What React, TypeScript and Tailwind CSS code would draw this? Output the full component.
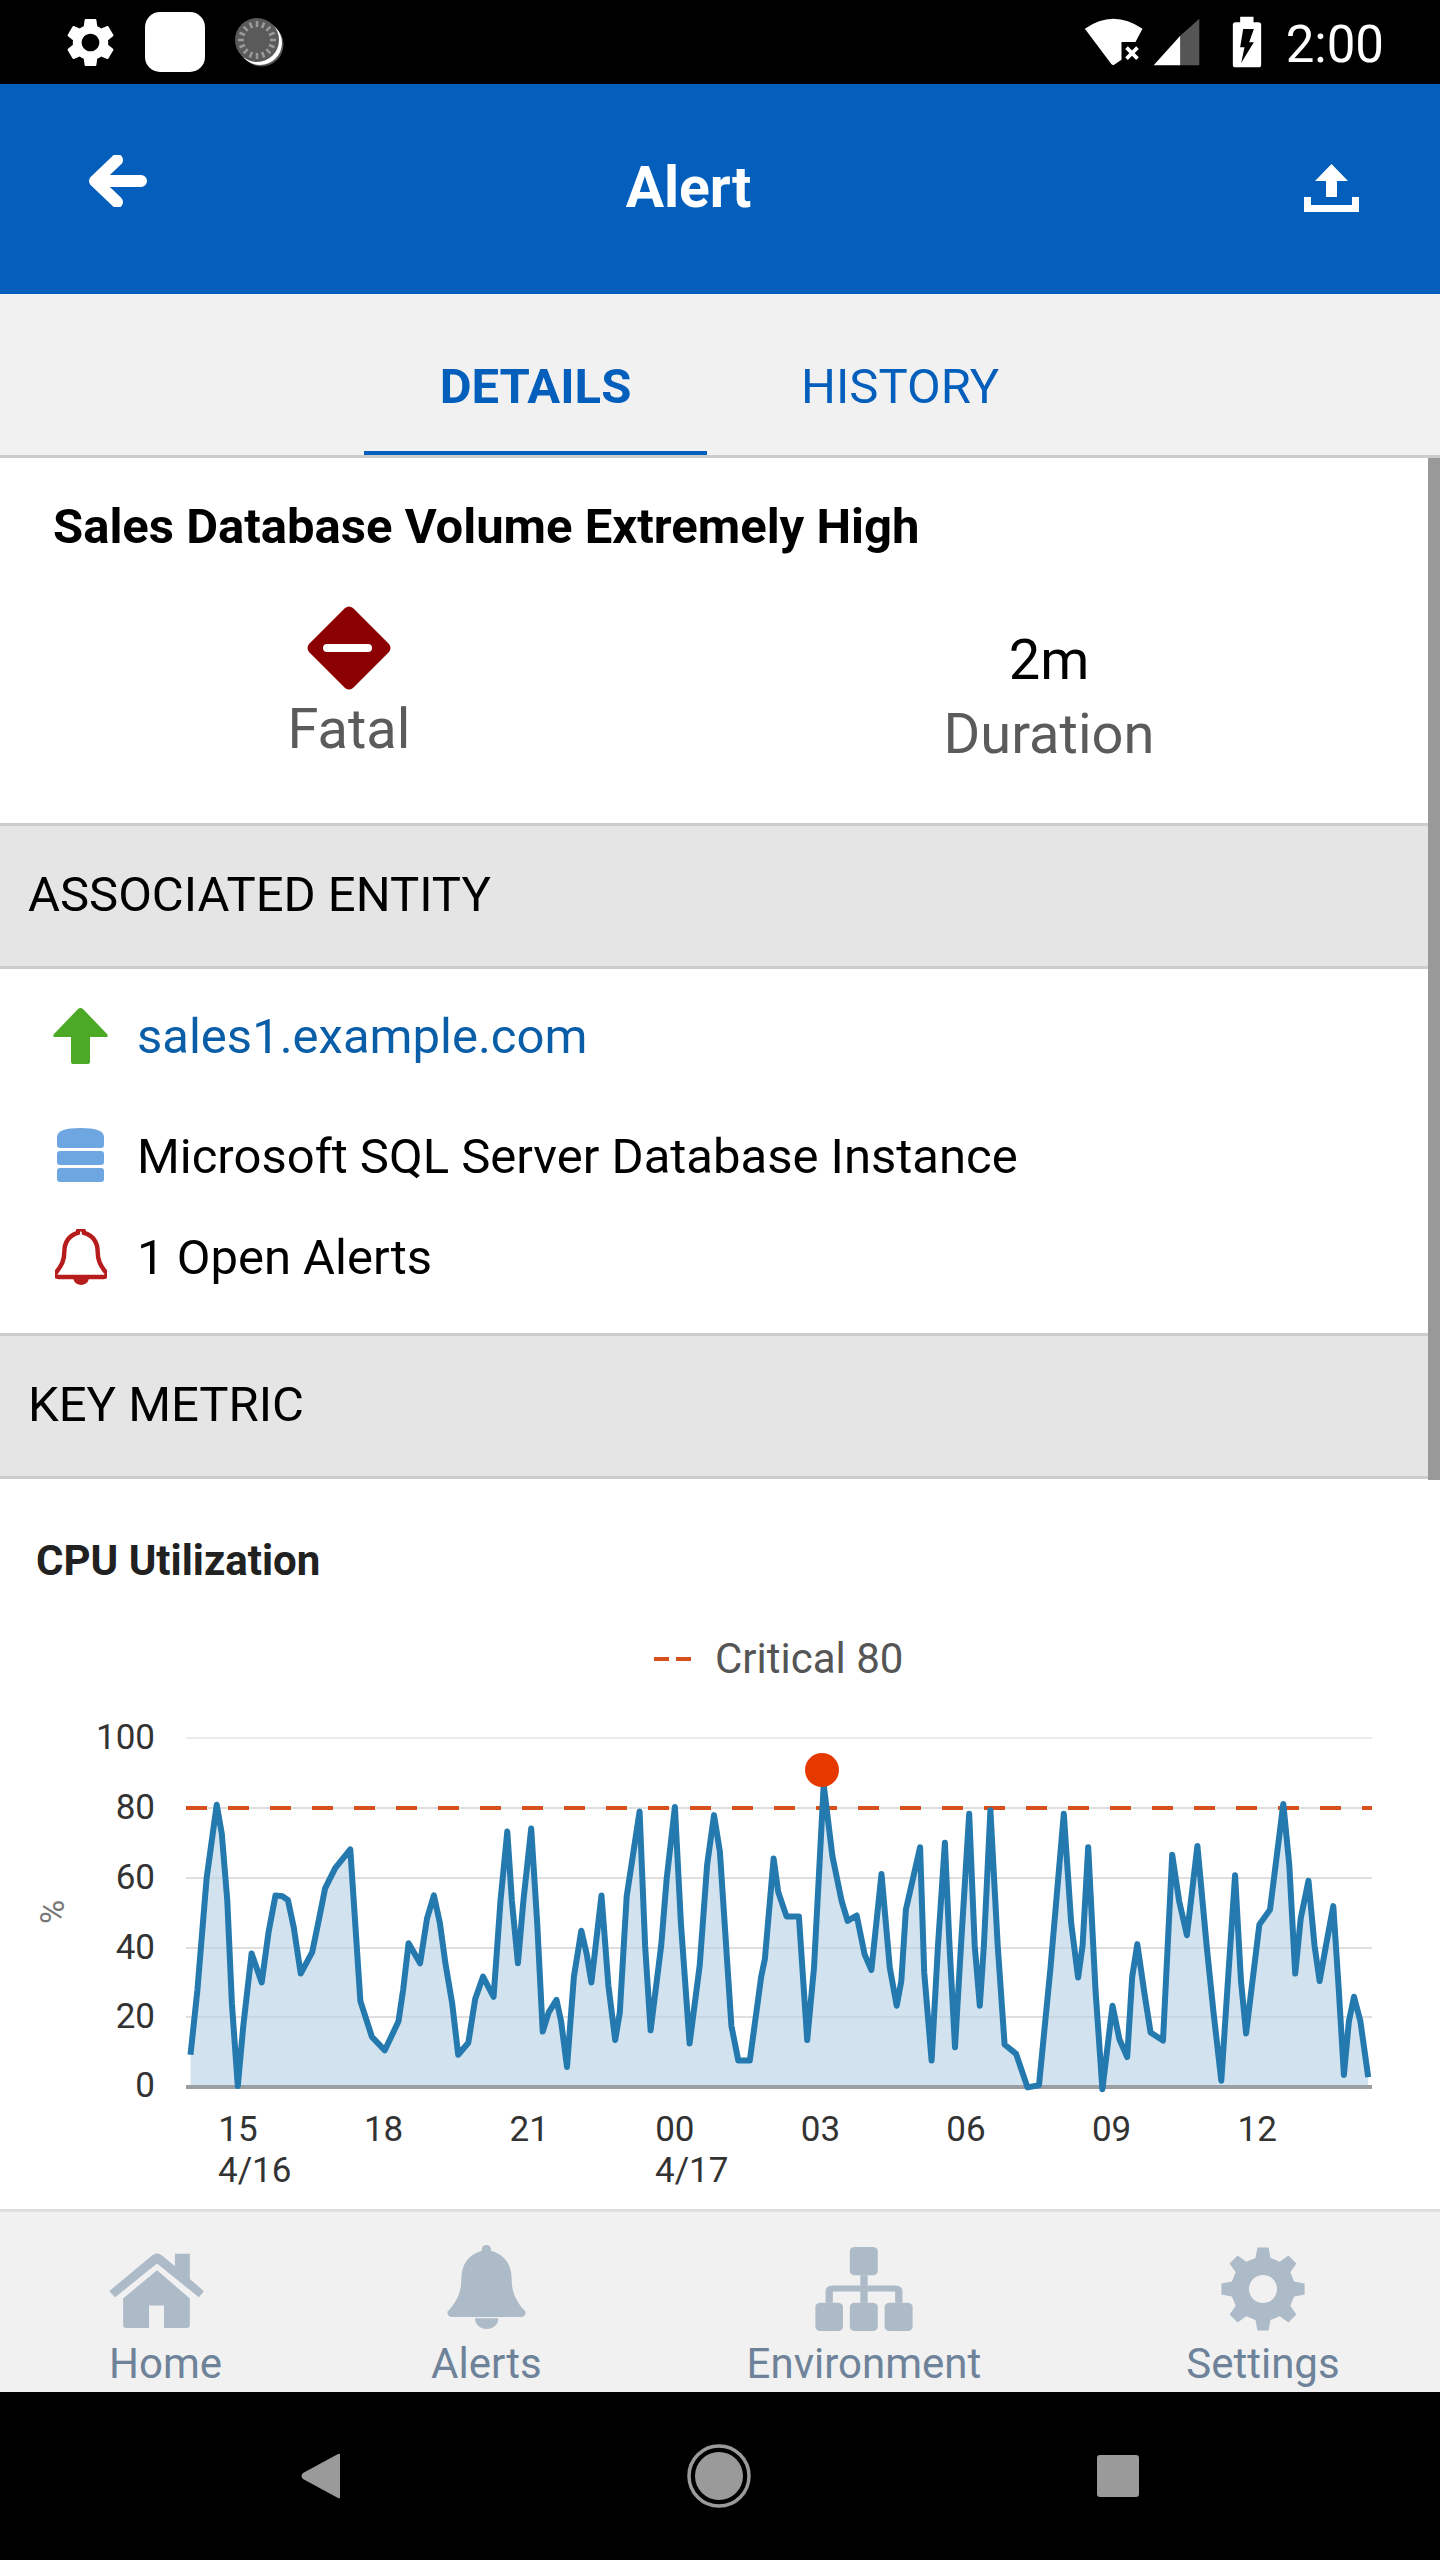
import { MdSettings } from "react-icons/md";

// chart points read off the reference, in crop pixels
const leftPts: number[][] = [
  [415, 1245], [430, 1100], [450, 850], [472, 685], [483, 750], [495, 900], [505, 1130], [518, 1315], [530, 1180], [548, 1018],
  [570, 1083], [585, 970], [600, 888], [615, 890], [627, 898], [640, 960], [655, 1063], [680, 1015], [695, 940], [708, 872],
  [730, 827], [763, 785], [785, 1125], [810, 1205], [838, 1235], [868, 1170], [878, 1100], [890, 995], [915, 1040], [930, 940],
  [945, 888], [958, 950], [970, 1040], [985, 1130], [998, 1245], [1020, 1218], [1035, 1120], [1052, 1070], [1075, 1115], [1090, 900],
  [1105, 745], [1115, 900], [1128, 1040], [1140, 900], [1157, 738], [1170, 950], [1182, 1193], [1195, 1150], [1212, 1122], [1222, 1170],
  [1235, 1272], [1250, 1070], [1266, 967], [1278, 1020], [1288, 1083], [1310, 888], [1325, 1090], [1340, 1212], [1350, 1150], [1365, 890],
  [1393, 700], [1405, 1000], [1417, 1190], [1440, 1000], [1452, 850], [1470, 690], [1483, 950], [1502, 1220], [1524, 1045], [1540, 820],
  [1555, 708],
];
const rightPts: number[][] = [
  [0, 790], [25, 1180], [40, 1258], [65, 1258], [90, 1070], [98, 1030], [117, 805], [127, 880], [145, 935], [172, 935],
  [190, 1212], [205, 1050], [226, 640], [245, 800], [265, 900], [278, 945], [298, 933], [315, 1020], [330, 1055], [352, 840],
  [370, 1050], [385, 1135], [395, 1080], [405, 920], [436, 780], [445, 1060], [461, 1258], [475, 1000], [490, 770], [500, 1000],
  [512, 1228], [525, 1000], [543, 705], [555, 1000], [566, 1135], [575, 1000], [589, 697], [605, 1000], [620, 1222], [645, 1243],
  [670, 1318], [695, 1313], [720, 1050], [749, 705], [765, 950], [780, 1072], [790, 1000], [802, 780], [818, 1100], [833, 1322],
  [855, 1135], [870, 1210], [887, 1250], [898, 1070], [909, 997], [925, 1110], [938, 1195], [965, 1213], [985, 797], [1000, 900],
  [1017, 977], [1040, 777], [1060, 1000], [1075, 1150], [1092, 1303], [1105, 1100], [1122, 843], [1135, 1080], [1146, 1197], [1175, 953],
  [1198, 920], [1227, 683], [1240, 820], [1253, 1063], [1265, 940], [1282, 855], [1295, 1000], [1306, 1080], [1320, 1000], [1336, 912],
  [1348, 1100], [1359, 1290], [1370, 1170], [1381, 1115], [1395, 1170], [1412, 1295],
];
const pts = [...leftPts, ...rightPts.map(([x, y]) => [x + 1568, y])].map(([x, y]) => [
  +(x / 2.178).toFixed(1),
  +(1500 + y / 2.24).toFixed(1),
]);
const linePath = pts.map((p) => p.join(",")).join(" ");
const areaPath = `${pts[0][0]},2088 ${linePath} ${pts[pts.length - 1][0]},2088`;

const yLabels = [
  { t: "100", y: 1739 },
  { t: "80", y: 1809 },
  { t: "60", y: 1879 },
  { t: "40", y: 1949 },
  { t: "20", y: 2018 },
  { t: "0", y: 2087 },
];
const xLabels = ["15", "18", "21", "00", "03", "06", "09", "12"];

function gearPath(r1: number, r2: number, hole: number, teeth: number) {
  const c = r1;
  const p: string[] = [];
  const step = (Math.PI * 2) / teeth;
  for (let i = 0; i < teeth; i++) {
    const a = i * step - Math.PI / 2;
    const pt = (r: number, d: number) =>
      `${(c + r * Math.cos(a + d * step)).toFixed(1)} ${(c + r * Math.sin(a + d * step)).toFixed(1)}`;
    p.push(`${i === 0 ? "M" : "L"}${pt(r2, -0.3)}`, `L${pt(r1, -0.17)}`, `L${pt(r1, 0.17)}`, `L${pt(r2, 0.3)}`);
  }
  p.push(`Z M${c - hole} ${c} a${hole} ${hole} 0 1 0 ${hole * 2} 0 a${hole} ${hole} 0 1 0 ${-hole * 2} 0 Z`);
  return p.join(" ");
}

const bellDome =
  "M1192 45Q1206 45 1206 62C1250 75 1268 105 1268 150C1268 195 1290 225 1310 245Q1310 261 1295 261H1090Q1075 261 1075 245C1095 225 1117 195 1117 150C1117 105 1135 75 1178 62Q1178 45 1192 45Z";
const bellClapper = "M1158 265H1228C1228 285 1212 297 1193 297C1174 297 1158 285 1158 265Z";

function StatusBar() {
  return (
    <div className="h-[84px] bg-black flex items-center shrink-0">
      <MdSettings className="ml-[61px] text-white w-[59px] h-[59px]" />
      <div className="ml-[25px] w-[60px] h-[60px] bg-white rounded-[15px]" />
      <svg viewBox="0 0 50 50" className="ml-[29px] w-[50px] h-[50px]">
        <circle cx="27.5" cy="27.5" r="22" fill="#555" />
        <circle cx="26" cy="26" r="22" fill="#fff" />
        <circle cx="23" cy="23" r="22" fill="#5a5a5a" />
        {Array.from({ length: 16 }).map((_, i) => (
          <line
            key={i}
            x1={23 + 13 * Math.cos((i * Math.PI) / 8)}
            y1={23 + 13 * Math.sin((i * Math.PI) / 8)}
            x2={23 + 19 * Math.cos((i * Math.PI) / 8)}
            y2={23 + 19 * Math.sin((i * Math.PI) / 8)}
            stroke="#9a9a9a"
            strokeWidth="2.5"
          />
        ))}
      </svg>
      <svg viewBox="35 50 185 150" className="ml-auto w-[62px] h-[50px]">
        <path d="M40 85Q125 25 213 85L192 125H150V178L128 193Q125 196 120 192Z" fill="#fff" />
        <path d="M165 142L198 175M198 142L165 175" stroke="#fff" strokeWidth="11" />
      </svg>
      <svg viewBox="245 58 142 144" className="ml-[8px] w-[47px] h-[48px]">
        <path d="M328 110V200H247Z" fill="#fff" />
        <path d="M328 110L385 60V200H328Z" fill="#555" />
      </svg>
      <svg viewBox="483 46 89 156" className="ml-[32px] w-[30px] h-[52px]">
        <path d="M507 48H547V65H562Q570 65 570 73V192Q570 200 562 200H493Q485 200 485 192V73Q485 65 493 65H507Z" fill="#fff" />
        <path d="M516 85H548L534 125H548L510 187L520 140H507Z" fill="#000" />
      </svg>
      <span className="ml-[24px] mr-[56px] pt-[5px] text-white text-[51px] leading-none">2:00</span>
    </div>
  );
}

function TopBar() {
  return (
    <div className="h-[210px] bg-[#035fbb] flex items-start justify-between pl-[87px] pr-[81px] shrink-0 relative">
      <svg viewBox="0 0 60 52" className="mt-[71px] w-[60px] h-[52px]">
        <path d="M8 26H54M30 5L8 26L30 47" stroke="#fff" strokeWidth="12" fill="none" strokeLinecap="round" strokeLinejoin="round" />
      </svg>
      <span className="text-white text-[57px] font-bold leading-none mt-[75px] mr-[74px]">Alert</span>
      <svg viewBox="0 0 55 48" className="mt-[80px] w-[55px] h-[48px]">
        <path d="M0 33H7V41H48V33H55V48H0Z" fill="#fff" />
        <path d="M27.5 0L44 17H33V33H22V17H11Z" fill="#fff" />
      </svg>
    </div>
  );
}

function Tabs() {
  return (
    <div className="h-[164px] bg-[#f1f1f1] border-b-[3px] border-[#cccccc] flex justify-start pl-[364px] shrink-0">
      <div className="w-[343px] h-[161px] flex justify-center pt-[68px] border-b-[4px] border-[#035fbb]">
        <span className="text-[#035fbb] text-[49px] font-bold leading-none">DETAILS</span>
      </div>
      <div className="ml-[94px] pt-[68px]">
        <span className="text-[#035fbb] text-[49px] leading-none">HISTORY</span>
      </div>
    </div>
  );
}

function SectionHead({ title }: { title: string }) {
  return (
    <div className="h-[146px] bg-[#e5e5e5] border-y-[3px] border-[#cccccc] flex items-center pl-[28px] pb-[4px]">
      <span className="text-black text-[49px] leading-none">{title}</span>
    </div>
  );
}

function Chart() {
  return (
    <svg viewBox="0 1720 1440 489" className="block w-[1440px] h-[489px] font-[Roboto]">
      {yLabels.slice(0, 5).map((l) => (
        <rect key={l.t} x="186" y={l.y - 1} width="1186" height="2" fill="#ebebeb" />
      ))}
      <polygon points={areaPath} fill="#d2e3ef" />
      {yLabels.slice(1, 5).map((l) => (
        <rect key={l.t} x="186" y={l.y - 1} width="1186" height="2" fill="#000" opacity="0.05" />
      ))}
      <line x1="186" y1="1809" x2="1372" y2="1809" stroke="#d5501a" strokeWidth="4" strokeDasharray="21 21" />
      <rect x="186" y="2086" width="1186" height="4" fill="#9a9fa3" />
      <polyline points={linePath} fill="none" stroke="#2479af" strokeWidth="6" strokeLinejoin="round" />
      <circle cx="822" cy="1771" r="17" fill="#e63900" />
      {yLabels.map((l) => (
        <text key={l.t} x="155" y={l.y + 11} textAnchor="end" fontSize="35" fill="#333">
          {l.t}
        </text>
      ))}
      <text x="0" y="0" fontSize="33" fill="#777" textAnchor="middle" transform="translate(64 1913) rotate(-90)">
        %
      </text>
      {xLabels.map((t, i) => (
        <text key={t} x={238 + i * 145.6} y="2142" textAnchor="middle" fontSize="35" fill="#333">
          {t}
        </text>
      ))}
      <text x="218" y="2183" fontSize="35" fill="#333">
        4/16
      </text>
      <text x="655" y="2183" fontSize="35" fill="#333">
        4/17
      </text>
    </svg>
  );
}

function Content() {
  return (
    <div className="flex-1 relative overflow-hidden bg-white flex flex-col">
      <div className="h-[365px] relative">
        <div className="pl-[53px] pt-[39px] text-[49px] font-bold leading-[60px] text-black">
          Sales Database Volume Extremely High
        </div>
        <div className="flex mt-[49px]">
          <div className="w-[698px] flex flex-col items-center">
            <svg viewBox="0 0 84 84" className="w-[84px] h-[84px]">
              <path d="M38 2Q42 -1 46 2L82 38Q85 42 82 46L46 82Q42 85 38 82L2 46Q-1 42 2 38Z" fill="#8b0000" />
              <rect x="16" y="38" width="49" height="8" rx="4" fill="#fff" />
            </svg>
            <span className="text-[#5b5b5b] text-[56px] leading-none mt-[11px]">Fatal</span>
          </div>
          <div className="w-[702px] flex flex-col items-center pt-[26px]">
            <span className="text-black text-[56px] leading-none">2m</span>
            <span className="text-[#5b5b5b] text-[56px] leading-none mt-[18px]">Duration</span>
          </div>
        </div>
      </div>
      <SectionHead title="ASSOCIATED ENTITY" />
      <div className="h-[364px] pl-[53px] relative flex flex-col">
        <div className="flex items-center h-[100px] mt-[17px]">
          <svg viewBox="0 0 55 56" className="-mt-[1px] w-[55px] h-[56px]">
            <path d="M25 1Q27.5 -1 30 1L54 26Q56 29 53 29H37V54Q37 56 35 56H20Q18 56 18 54V29H2Q-1 29 1 26Z" fill="#4ca926" />
          </svg>
          <span className="ml-[29px] text-[#0a5ea8] text-[49px] leading-none">sales1.example.com</span>
        </div>
        <div className="flex items-center h-[70px] mt-[35px]">
          <svg viewBox="0 0 47 54" className="-mt-[2px] ml-[4px] w-[47px] h-[54px]">
            <path d="M0 9Q0 0 23.5 0Q47 0 47 9V17Q47 20 44 20H3Q0 20 0 17Z" fill="#6ea6e2" />
            <rect y="23" width="47" height="14" rx="3" fill="#6ea6e2" />
            <rect y="40" width="47" height="14" rx="3" fill="#6ea6e2" />
          </svg>
          <span className="ml-[33px] text-black text-[49px] leading-none">Microsoft SQL Server Database Instance</span>
        </div>
        <div className="flex items-center h-[70px] mt-[31px]">
          <svg viewBox="1075 45 235 252" className="ml-[2px] w-[52px] h-[56px]">
            <path d={bellDome} fill="none" stroke="#b71c1c" strokeWidth="20" />
            <path d={bellClapper} fill="#b71c1c" />
          </svg>
          <span className="ml-[30px] text-black text-[49px] leading-none">1 Open Alerts</span>
        </div>
      </div>
      <SectionHead title="KEY METRIC" />
      <div className="h-[240px]">
        <div className="pl-[36px] pt-[57px] text-[42px] font-bold leading-[50px] text-[#212121]">CPU Utilization</div>
        <div className="flex items-center pl-[654px] mt-[52px]">
          <div className="flex gap-[7px]">
            <div className="w-[15px] h-[4px] bg-[#d5501a]" />
            <div className="w-[15px] h-[4px] bg-[#d5501a]" />
          </div>
          <span className="ml-[24px] text-[42px] leading-none text-[#555555]">Critical 80</span>
        </div>
      </div>
      <Chart />
      <div className="absolute top-0 right-0 w-[12px] h-[1022px] bg-[#999999]" />
    </div>
  );
}

const navItems = ["Home", "Alerts", "Environment", "Settings"];

function NavIcon({ name }: { name: string }) {
  if (name === "Home") {
    return (
      <svg viewBox="60 68 285 226" className="w-[95px] h-[75px] self-start mt-[6px]">
        <path d="M60 183L190 75Q204 64 218 75L258 108V70H303V146L345 183L330 201L204 100L78 201Z" fill="#adbac7" />
        <path d="M204 120L303 205V285Q303 294 294 294H225V226H180V294H111Q102 294 102 285V205Z" fill="#adbac7" />
      </svg>
    );
  }
  if (name === "Alerts") {
    return (
      <svg viewBox="1075 45 235 252" className="-mt-[2px] w-[79px] h-[84px]">
        <path d={bellDome} fill="#adbac7" />
        <path d={bellClapper} fill="#adbac7" />
      </svg>
    );
  }
  if (name === "Environment") {
    return (
      <svg viewBox="210 50 242 253" preserveAspectRatio="none" className="w-[98px] h-[84px]">
        <rect x="296" y="50" width="69" height="85" rx="12" fill="#adbac7" />
        <rect x="211" y="218" width="68" height="85" rx="12" fill="#adbac7" />
        <rect x="296" y="218" width="69" height="85" rx="12" fill="#adbac7" />
        <rect x="382" y="218" width="69" height="85" rx="12" fill="#adbac7" />
        <rect x="322" y="135" width="18" height="83" fill="#adbac7" />
        <path d="M245 218V185Q245 175 255 175H407Q417 175 417 185V218" fill="none" stroke="#adbac7" strokeWidth="18" />
      </svg>
    );
  }
  return (
    <svg viewBox="0 0 84 84" className="w-[84px] h-[84px]">
      <path d={gearPath(42, 32, 14, 8)} fill="#adbac7" fillRule="evenodd" />
    </svg>
  );
}

function BottomNav() {
  return (
    <div className="h-[183px] bg-[#f1f1f1] border-t-[3px] border-[#dedede] flex gap-[205px] shrink-0 pl-[109px]">
      {navItems.map((item) => (
        <div key={item} className={item === "Home" ? "flex flex-col items-center pt-[35px] mr-[4px]" : "flex flex-col items-center pt-[35px]"}>
          <div className={item === "Home" ? "h-[84px] flex self-stretch justify-start" : "h-[84px] flex self-stretch justify-center"}>
            <NavIcon name={item} />
          </div>
          <span className="text-[#6e8399] text-[42px] leading-none mt-[12px]">{item}</span>
        </div>
      ))}
    </div>
  );
}

function AndroidNav() {
  return (
    <div className="h-[168px] bg-black flex items-center shrink-0 pl-[301px]">
      <svg viewBox="0 0 39 46" className="w-[39px] h-[46px]">
        <path d="M39 2V44Q39 46 37 45L2 26Q-1 23 2 20L37 1Q39 0 39 2Z" fill="#9a9a9a" />
      </svg>
      <svg viewBox="0 0 64 64" className="ml-[347px] w-[64px] h-[64px]">
        <circle cx="32" cy="32" r="30" fill="none" stroke="#9a9a9a" strokeWidth="3.5" />
        <circle cx="32" cy="32" r="24" fill="#9a9a9a" />
      </svg>
      <div className="ml-[346px] w-[42px] h-[42px] bg-[#9a9a9a] rounded-[3px]" />
    </div>
  );
}

export default function App() {
  return (
    <div className="w-[1440px] h-[2560px] flex flex-col overflow-hidden font-[Roboto]">
      <StatusBar />
      <TopBar />
      <Tabs />
      <Content />
      <BottomNav />
      <AndroidNav />
    </div>
  );
}
